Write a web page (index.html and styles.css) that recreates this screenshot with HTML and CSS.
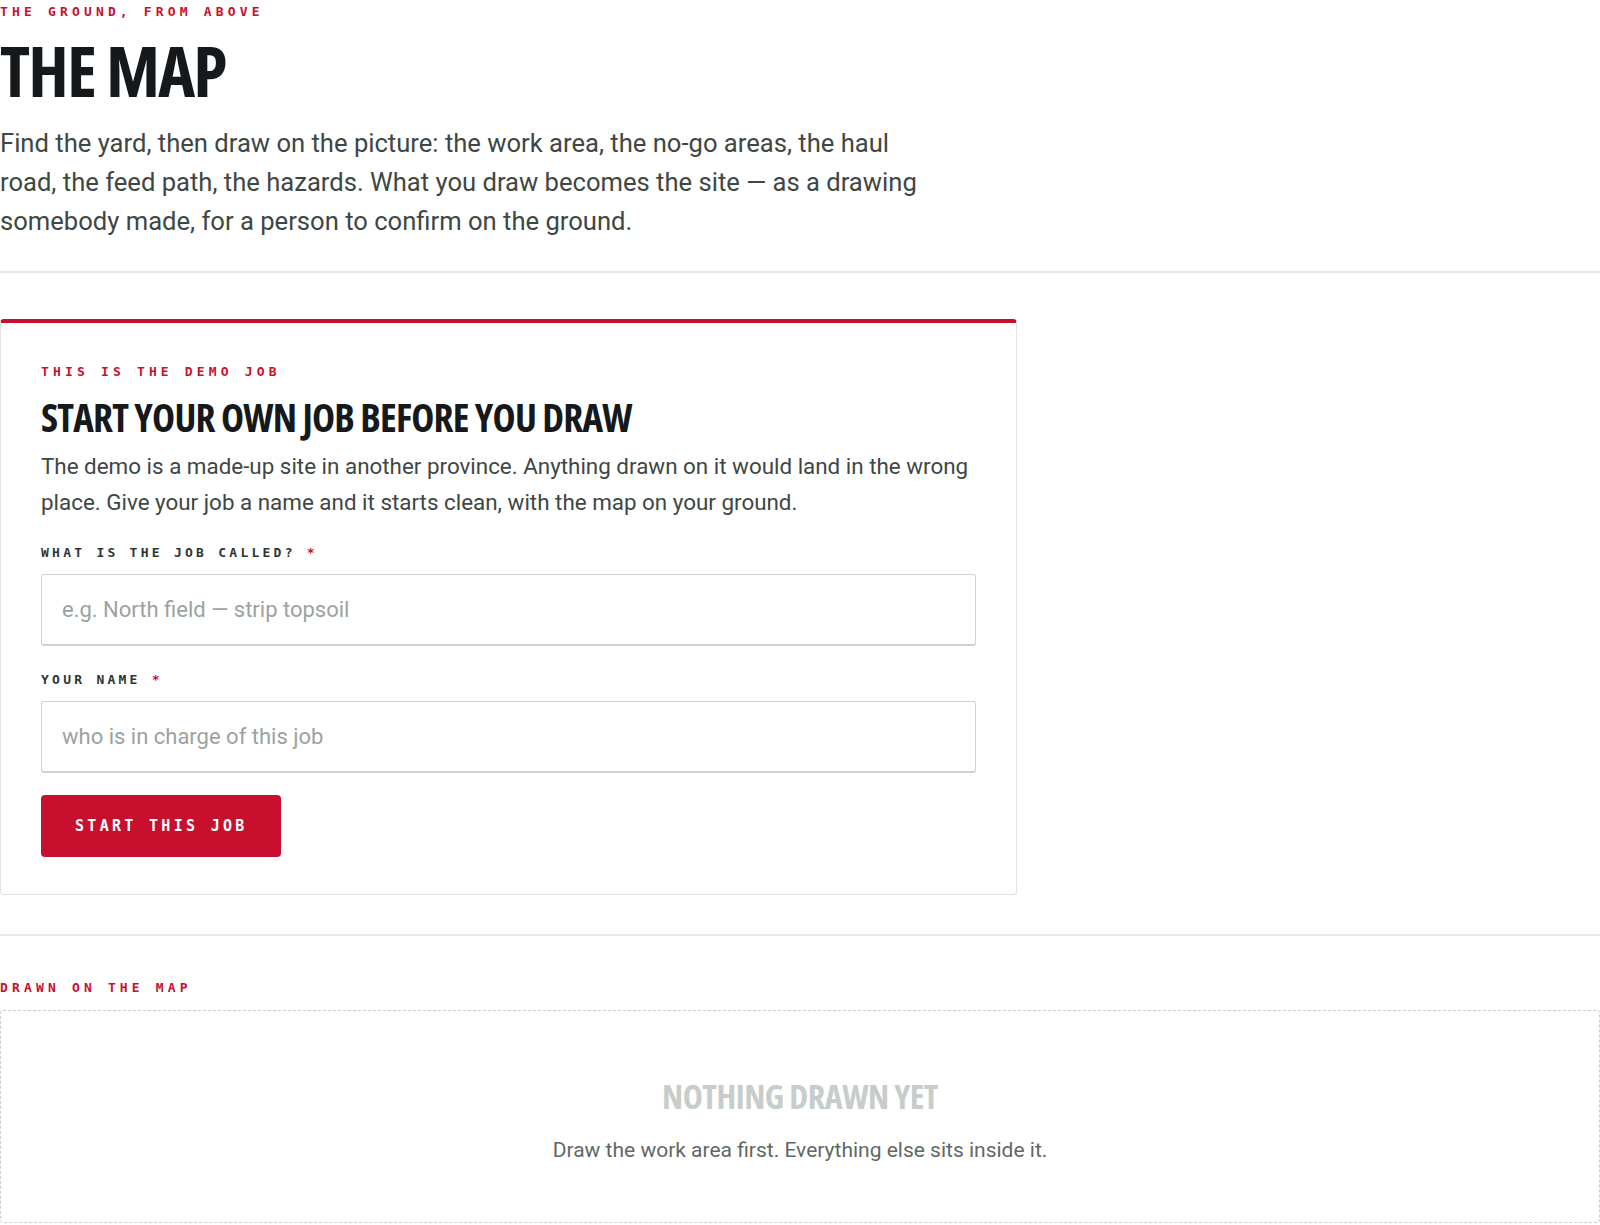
FILE: index.html
```html
<!DOCTYPE html>
<html lang="en">
<head>
<meta charset="utf-8">
<title>The Map</title>
<link rel="stylesheet" href="styles.css">
</head>
<body>
<header class="intro">
  <p class="eyebrow">The ground, from above</p>
  <h1 class="title">The map</h1>
  <p class="lede">Find the yard, then draw on the picture: the work area, the no-go areas, the haul road, the feed path, the hazards. What you draw becomes the site — as a drawing somebody made, for a person to confirm on the ground.</p>
</header>

<section class="gate">
  <form class="card" onsubmit="return false">
    <p class="eyebrow">This is the demo job</p>
    <h2 class="card-title">Start your own job before you draw</h2>
    <p class="card-text">The demo is a made-up site in another province. Anything drawn on it would land in the wrong place. Give your job a name and it starts clean, with the map on your ground.</p>
    <div class="field">
      <label class="label" for="job">What is the job called? <span class="req">*</span></label>
      <input class="input" id="job" type="text" placeholder="e.g. North field — strip topsoil">
    </div>
    <div class="field">
      <label class="label" for="who">Your name <span class="req">*</span></label>
      <input class="input" id="who" type="text" placeholder="who is in charge of this job">
    </div>
    <button class="btn" type="submit">Start this job</button>
  </form>
</section>

<section class="drawn">
  <p class="eyebrow">Drawn on the map</p>
  <div class="empty">
    <h3 class="empty-title">Nothing drawn yet</h3>
    <p class="empty-text">Draw the work area first. Everything else sits inside it.</p>
  </div>
</section>
</body>
</html>
```
FILE: styles.css
```css
* { box-sizing: border-box; }

body {
  margin: 0;
  background: #ffffff;
  color: #16191b;
  font-family: Roboto, "Liberation Sans", sans-serif;
}

p, h1, h2, h3 { margin: 0; }

.eyebrow {
  font-family: "DejaVu Sans Mono", "Liberation Mono", monospace;
  font-weight: 700;
  font-size: 13px;
  line-height: 20px;
  letter-spacing: 0.32em;
  text-transform: uppercase;
  color: #c8102e;
}

/* ---------- intro ---------- */
.intro {
  padding: 2px 0 30px;
  border-bottom: 2px solid #e6e9e8;
}

.title {
  margin-top: 13px;
  font-family: "Open Sans", sans-serif;
  font-stretch: 75%;
  font-weight: 700;
  font-size: 70px;
  line-height: 70px;
  letter-spacing: -0.025em;
  text-transform: uppercase;
  color: #16191b;
}

.lede {
  margin-top: 19px;
  max-width: 940px;
  font-size: 25.6px;
  line-height: 39px;
  color: #3e4744;
}

/* ---------- gate card ---------- */
.gate {
  padding: 46px 0 39px;
  border-bottom: 2px solid #e6e9e8;
}

.card {
  width: 1017px;
  padding: 39px 40px 37px;
  border: 1px solid #dfe3e2;
  border-top: 4px solid #c8102e;
  border-radius: 4px;
  background: #fff;
}

.card-title {
  margin-top: 13px;
  font-family: "Open Sans", sans-serif;
  font-stretch: 75%;
  font-weight: 700;
  font-size: 39px;
  line-height: 44px;
  letter-spacing: -0.02em;
  text-transform: uppercase;
  color: #16191b;
}

.card-text {
  margin-top: 9px;
  font-size: 22.4px;
  line-height: 36px;
  color: #3e4744;
}

.field {
  display: flex;
  flex-direction: column;
  gap: 11px;
  margin-top: 24px;
}

.card-text + .field { margin-top: 23px; }

.label {
  font-family: "DejaVu Sans Mono", "Liberation Mono", monospace;
  font-weight: 700;
  font-size: 13px;
  line-height: 20px;
  letter-spacing: 0.25em;
  text-transform: uppercase;
  color: #2e3532;
}

.req { color: #c8102e; }

.input {
  display: block;
  width: 100%;
  height: 72px;
  padding: 0 20px;
  border: 1px solid #cdd3d1;
  border-bottom-width: 2px;
  border-radius: 3px;
  background: #fff;
  font-family: Roboto, "Liberation Sans", sans-serif;
  font-size: 22px;
  color: #16191b;
  outline: none;
}

.input::placeholder { color: #9aa3a0; }

.btn {
  display: block;
  margin-top: 22px;
  height: 62px;
  padding: 0 33px 0 34px;
  border: 0;
  border-radius: 4px;
  background: #c8102e;
  color: #fff;
  font-family: "DejaVu Sans Mono", "Liberation Mono", monospace;
  font-weight: 700;
  font-size: 15px;
  letter-spacing: 0.22em;
  text-transform: uppercase;
  cursor: pointer;
}

/* ---------- drawn ---------- */
.drawn {
  padding-top: 42px;
}

.empty {
  margin-top: 12px;
  padding: 64px 24px 57px;
  border: 1px dashed #c9cfcd;
  border-radius: 3px;
  text-align: center;
}

.empty-title {
  font-family: "Open Sans", sans-serif;
  font-stretch: 75%;
  font-weight: 700;
  font-size: 34px;
  line-height: 42px;
  letter-spacing: -0.015em;
  text-transform: uppercase;
  color: #c6cdca;
}

.empty-text {
  margin-top: 18px;
  font-size: 21px;
  line-height: 30px;
  color: #5f6865;
}
```
